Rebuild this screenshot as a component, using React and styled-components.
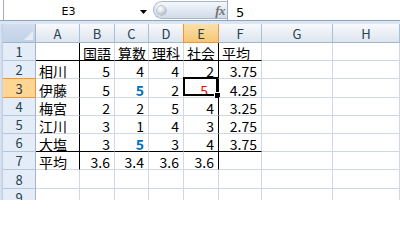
import React from 'react';
import styled, { createGlobalStyle } from 'styled-components';

const Global = createGlobalStyle`
  html, body { margin: 0; padding: 0; background: #fff; }
  body { width: 400px; height: 200px; overflow: hidden; font-family: "Noto Sans CJK JP", sans-serif; }
`;

const Window = styled.div`
  width: 400px;
  height: 200px;
  overflow: hidden;
  display: flex;
  flex-direction: column;
  background: #fff;
`;

const FormulaBar = styled.div`
  display: flex;
  height: 20px;
  flex: none;
  padding-left: 3px;
  background: #fff;
`;

const NameBox = styled.div`
  width: 150px;
  flex: none;
  box-sizing: border-box;
  border-left: 1px solid #a3acb8;
  display: flex;
  background: #fff;
`;

const NameText = styled.div`
  width: 129px;
  text-align: center;
  padding-top: 6px;
  line-height: 12px;
  font: 11px/12px "DejaVu Sans", sans-serif;
  color: #000;
`;

const Arrow = styled.svg`
  margin: 10px 0 0 7px;
  width: 7px;
  height: 4px;
  display: block;
`;

const Splitter = styled.div`
  width: 74px;
  flex: none;
  box-sizing: border-box;
  margin-top: 1px;
  height: 18px;
  border: 1px solid #a4b5cc;
  border-right: none;
  border-radius: 10px 0 0 10px;
  background: linear-gradient(#f5f8fc, #dfe7f2 55%, #d2dcea);
  display: flex;
  align-items: center;
  justify-content: space-between;
  padding: 0 2px 0 3px;
`;

const Knob = styled.div`
  width: 9px;
  height: 9px;
  border-radius: 50%;
  background: radial-gradient(circle at 35% 30%, #ffffff 0%, #e2e5e9 35%, #9aa3ad 100%);
  box-shadow: 0 0 0 0.5px #8d96a1;
`;

const Fx = styled.span`
  font: italic bold 13px/13px "Liberation Serif", serif;
  color: #737373;
  letter-spacing: -0.5px;
  padding-top: 1px;
`;

const FormulaInput = styled.div`
  flex: 1;
  box-sizing: border-box;
  border-left: 1px solid #a3acb8;
  padding: 6px 0 0 8px;
  font: 13px/13px "DejaVu Sans", sans-serif;
  color: #000;
  background: #fff;
`;

const Separator = styled.div`
  height: 4px;
  flex: none;
  box-sizing: border-box;
  border-top: 1px solid #8ea4c1;
  background: #dce6f3;
`;

const Sheet = styled.div`
  display: grid;
  grid-template-columns: 3px 33px 44px 35px 34px 35px 35px 43px 71px 1fr;
  grid-template-rows: 19px 18px 18px 19px 18px 18px 18px 18px 19px 18px;
  flex: none;
`;

const Strip = styled.div`
  background: linear-gradient(90deg, #dde6f2, #bccde3);
`;

const Corner = styled.div`
  box-sizing: border-box;
  background: linear-gradient(#d2ddee, #c1d1e7);
  border-right: 1px solid #9eb6ce;
  border-bottom: 1px solid #9eb6ce;
  display: flex;
  align-items: flex-end;
  justify-content: flex-end;
  padding: 0 2px 2px 0;
`;

const ColHead = styled.div`
  box-sizing: border-box;
  display: flex;
  align-items: flex-end;
  justify-content: center;
  padding-bottom: 2px;
  font-size: 13px;
  line-height: 13px;
  color: #27414e;
  background: ${(p) => (p.$sel ? 'linear-gradient(#fae0ad, #f5c774)' : 'linear-gradient(#f7f9fc, #dee5ef)')};
  border-right: 1px solid ${(p) => (p.$sel ? '#f29536' : '#a9bfd6')};
  border-bottom: 1px solid ${(p) => (p.$sel ? '#f29536' : '#9eb6ce')};
  box-shadow: ${(p) => (p.$sel ? '-1px 0 0 #f29536' : 'none')};
`;

const RowHead = styled.div`
  box-sizing: border-box;
  display: flex;
  align-items: flex-end;
  justify-content: center;
  padding-bottom: 2px;
  font-size: 13px;
  line-height: 13px;
  color: #27414e;
  background: ${(p) => (p.$sel ? '#fed592' : '#e4ecf7')};
  border-right: 1px solid ${(p) => (p.$sel ? '#f29536' : '#9eb6ce')};
  border-bottom: 1px solid ${(p) => (p.$sel ? '#f29536' : '#b4c7dc')};
  box-shadow: ${(p) => (p.$sel ? '0 -1px 0 #f29536' : 'none')};
`;

const Cell = styled.div`
  position: relative;
  box-sizing: border-box;
  display: flex;
  align-items: flex-end;
  justify-content: ${(p) => (p.$num ? 'flex-end' : 'flex-start')};
  padding-left: ${(p) => (p.$num ? 0 : 3)}px;
  padding-right: ${(p) => (p.$num ? p.$padR : 0)}px;
  border-right: 1px solid ${(p) => (p.$rDark ? '#000' : '#d0d7e5')};
  border-bottom: 1px solid ${(p) => (p.$bDark ? '#000' : '#d0d7e5')};
  font-size: 14px;
  line-height: 14px;
  white-space: nowrap;
  color: ${(p) => p.$color};
  font-weight: ${(p) => (p.$bold ? 700 : 400)};
`;

const SelBox = styled.div`
  position: absolute;
  left: -1px;
  right: 0;
  top: -2px;
  bottom: 1px;
  border: 2px solid #000;
  pointer-events: none;
`;

const Handle = styled.div`
  position: absolute;
  right: -5px;
  bottom: -5px;
  width: 5px;
  height: 5px;
  background: #000;
  border: 1px solid #fff;
`;

const COLS = ['A', 'B', 'C', 'D', 'E', 'F', 'G', 'H'];
const B = (v) => ({ v, color: '#0070c0', bold: true });
const R = (v) => ({ v, color: '#ff0000', padR: 10 });

const DATA = [
  ['', '国語', '算数', '理科', '社会', '平均'],
  ['相川', 5, 4, 4, 2, '3.75'],
  ['伊藤', 5, B(5), 2, R(5), '4.25'],
  ['梅宮', 2, 2, 5, 4, '3.25'],
  ['江川', 3, 1, 4, 3, '2.75'],
  ['大塩', 3, B(5), 3, 4, '3.75'],
  ['平均', '3.6', '3.4', '3.6', '3.6', ''],
  [],
  [],
];

function renderCell(raw, r, c) {
  const obj = raw && typeof raw === 'object' ? raw : { v: raw };
  const v = obj.v === undefined ? '' : obj.v;
  const isNum = r >= 1 && r <= 6 && c >= 1 && c <= 5;
  const inTable = r <= 6 && c <= 5;
  const bDark = (r === 0 || r === 5) && c <= 5;
  const rDark = r <= 6 && (c === 0 || c === 4);
  const sel = r === 2 && c === 4;
  return (
    <Cell
      key={`c${r}-${c}`}
      $num={isNum}
      $padR={obj.padR || 4}
      $bDark={bDark}
      $rDark={rDark}
      $color={obj.color || '#000'}
      $bold={obj.bold}
    >
      {inTable ? v : ''}
      {sel && (
        <SelBox>
          <Handle />
        </SelBox>
      )}
    </Cell>
  );
}

export default function App() {
  return (
    <Window>
      <Global />
      <FormulaBar>
        <NameBox>
          <NameText>E3</NameText>
          <Arrow viewBox="0 0 7 4">
            <polygon points="0,0 7,0 3.5,4" fill="#000" />
          </Arrow>
        </NameBox>
        <Splitter>
          <Knob />
          <Fx>fx</Fx>
        </Splitter>
        <FormulaInput>5</FormulaInput>
      </FormulaBar>
      <Separator />
      <Sheet>
        <Strip />
        <Corner>
          <svg width="9" height="9" viewBox="0 0 9 9">
            <polygon points="9,0 9,9 0,9" fill="#e6ecf5" />
          </svg>
        </Corner>
        {COLS.map((c) => (
          <ColHead key={c} $sel={c === 'E'}>
            {c}
          </ColHead>
        ))}
        {DATA.map((row, r) => (
          <React.Fragment key={`r${r}`}>
            <Strip />
            <RowHead $sel={r === 2}>{r + 1}</RowHead>
            {COLS.map((_, c) => renderCell(row[c], r, c))}
          </React.Fragment>
        ))}
      </Sheet>
    </Window>
  );
}
